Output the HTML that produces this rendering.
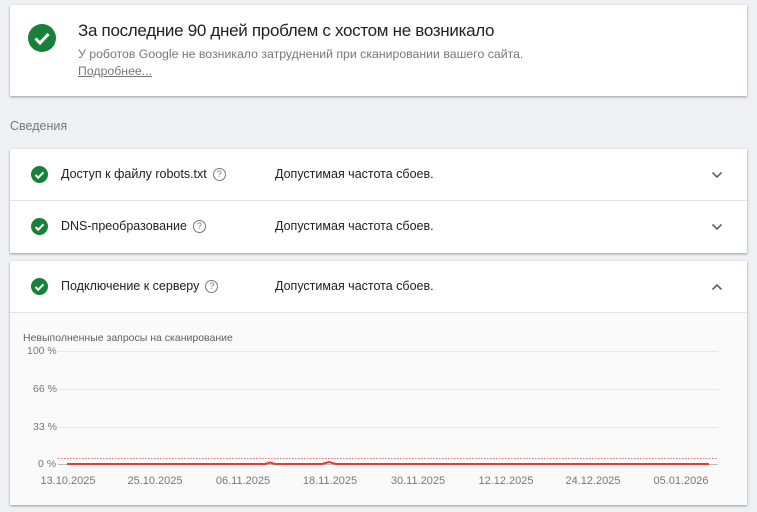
<!DOCTYPE html>
<html><head><meta charset="utf-8"><style>
body{margin:0;width:757px;height:512px;background:#eef0f4;font-family:"Liberation Sans",sans-serif;position:relative;overflow:hidden;color:#202124}
.card{position:absolute;left:10px;width:737px;background:#fff;box-shadow:0 1px 2px rgba(60,64,67,.35),0 1px 3px rgba(60,64,67,.15)}
.row{position:absolute;left:0;width:737px;height:51px}
.ck{position:absolute;left:21px;top:17px}
.lbl{position:absolute;left:51px;top:18px;font-size:12.5px;color:#202124}
.q{display:inline-block;width:11px;height:11px;border:1.3px solid #777;border-radius:50%;font-size:9px;line-height:11px;text-align:center;color:#777;margin-left:6px;vertical-align:1px}
.st{position:absolute;left:265px;top:18px;font-size:12.5px}
.chev{position:absolute;left:701px;top:22px}
.ax{position:absolute;font-size:10.5px;color:#777}
.dt{position:absolute;top:475px;font-size:11px;color:#777;width:80px;text-align:center}
</style></head><body>
<div class="card" style="top:5px;height:91px">
<svg style="position:absolute;left:18px;top:19px" width="28" height="28" viewBox="0 0 28 28"><circle cx="14" cy="14" r="14" fill="#188038"/><path d="M7.5 14.5l4.5 4.5 8.5-9" stroke="#fff" stroke-width="3" fill="none"/></svg>
<div style="position:absolute;left:68px;top:16px;font-size:17px;color:#202124;letter-spacing:-0.3px">За последние 90 дней проблем с хостом не возникало</div>
<div style="position:absolute;left:68px;top:42px;font-size:12.3px;color:#777">У роботов Google не возникало затруднений при сканировании вашего сайта.</div>
<div style="position:absolute;left:68px;top:59px;font-size:12.3px;color:#777;text-decoration:underline">Подробнее...</div>
</div>
<div style="position:absolute;left:10px;top:119px;font-size:12.5px;color:#777">Сведения</div>
<div class="card" style="top:149px;height:104px">
<div class="row" style="top:0"><svg class="ck" width="17" height="17" viewBox="0 0 17 17"><circle cx="8.5" cy="8.5" r="8.5" fill="#188038"/><path d="M4.5 9l2.7 2.7 5.3-5.4" stroke="#fff" stroke-width="2" fill="none"/></svg><div class="lbl">Доступ к файлу robots.txt<span class="q">?</span></div><div class="st">Допустимая частота сбоев.</div><svg class="chev" width="12" height="8"><path d="M1.5 1.5l4.5 4.5 4.5-4.5" stroke="#5f6368" stroke-width="1.6" fill="none"/></svg></div>
<div style="position:absolute;top:51px;left:0;width:737px;height:1px;background:#e3e3e3"></div>
<div class="row" style="top:52px"><svg class="ck" width="17" height="17" viewBox="0 0 17 17"><circle cx="8.5" cy="8.5" r="8.5" fill="#188038"/><path d="M4.5 9l2.7 2.7 5.3-5.4" stroke="#fff" stroke-width="2" fill="none"/></svg><div class="lbl">DNS-преобразование<span class="q">?</span></div><div class="st">Допустимая частота сбоев.</div><svg class="chev" width="12" height="8"><path d="M1.5 1.5l4.5 4.5 4.5-4.5" stroke="#5f6368" stroke-width="1.6" fill="none"/></svg></div>
</div>
<div class="card" style="top:261px;height:244px;background:#fafafa">
<div class="row" style="top:0;background:#fff;border-bottom:1px solid #e3e3e3"><svg class="ck" width="17" height="17" viewBox="0 0 17 17"><circle cx="8.5" cy="8.5" r="8.5" fill="#188038"/><path d="M4.5 9l2.7 2.7 5.3-5.4" stroke="#fff" stroke-width="2" fill="none"/></svg><div class="lbl">Подключение к серверу<span class="q">?</span></div><div class="st">Допустимая частота сбоев.</div><svg class="chev" width="12" height="8"><path d="M1.5 6.5l4.5-4.5 4.5 4.5" stroke="#5f6368" stroke-width="1.6" fill="none"/></svg></div>
</div>
<div class="ax" style="left:23px;top:332px;color:#5f6368">Невыполненные запросы на сканирование</div>
<div class="ax" style="left:27px;top:345px">100 %</div>
<div class="ax" style="left:33px;top:383px">66 %</div>
<div class="ax" style="left:33px;top:421px">33 %</div>
<div class="ax" style="left:38px;top:458px">0 %</div>
<svg style="position:absolute;left:0;top:0" width="757" height="512">
<g stroke="#e8e8e8" stroke-width="1"><line x1="58" y1="351.5" x2="718" y2="351.5"/><line x1="58" y1="389.5" x2="718" y2="389.5"/><line x1="58" y1="427.5" x2="718" y2="427.5"/></g>
<line x1="58" y1="464.5" x2="718" y2="464.5" stroke="#bdbdbd"/>
<line x1="58" y1="458.5" x2="718" y2="458.5" stroke="#e57373" stroke-dasharray="1.5 1.5"/>
<path d="M67 464 L265 464 L270 462.5 L275 464 L322 464 L329 462 L336 464 L709 464" stroke="#e53935" stroke-width="2" fill="none"/>
</svg>
<div class="dt" style="left:28px">13.10.2025</div>
<div class="dt" style="left:115px">25.10.2025</div>
<div class="dt" style="left:203px">06.11.2025</div>
<div class="dt" style="left:290px">18.11.2025</div>
<div class="dt" style="left:378px">30.11.2025</div>
<div class="dt" style="left:466px">12.12.2025</div>
<div class="dt" style="left:553px">24.12.2025</div>
<div class="dt" style="left:641px">05.01.2026</div>
</body></html>
